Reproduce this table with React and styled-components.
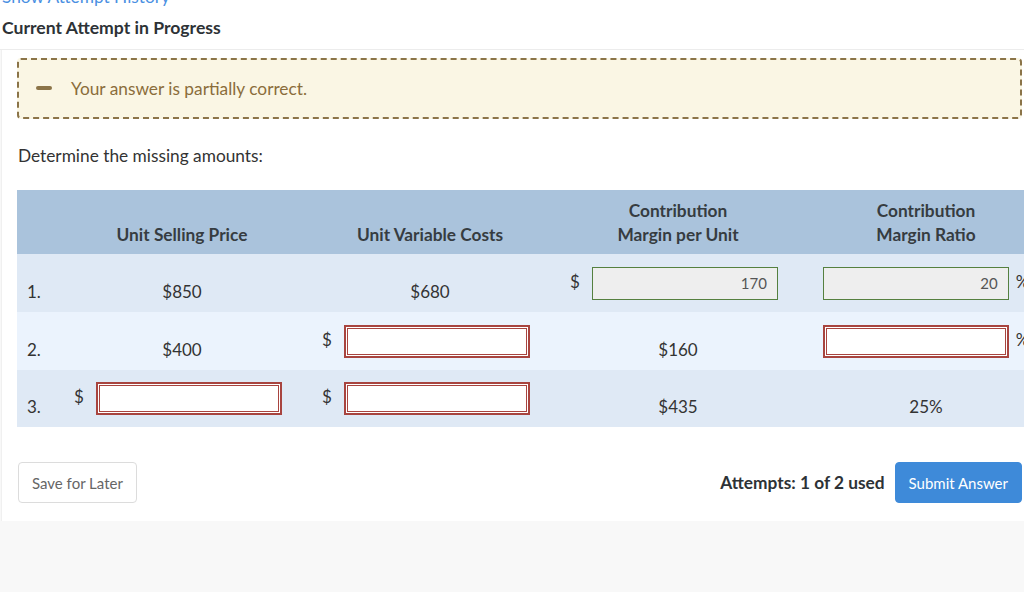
import React from 'react';
import styled, { createGlobalStyle } from 'styled-components';

const GlobalStyle = createGlobalStyle`
  body {
    margin: 0;
    background: #f8f8f8;
    font-family: Lato, 'Open Sans', sans-serif;
    color: #333;
    overflow: hidden;
  }
`;

const Top = styled.header`
  background: #fff;
  padding: 0 0 0 2px;
  height: 49px;
  overflow: hidden;
  border-bottom: 1px solid #ececec;

  a {
    display: block;
    margin-top: -13px;
    font-size: 17.3px;
    line-height: 20px;
    color: #4a90e2;
    text-decoration: none;
  }
  h1 {
    margin: 10px 0 0 0;
    font-size: 17.6px;
    font-weight: 700;
    line-height: 22px;
    color: #2d3236;
  }
`;

const Panel = styled.section`
  background: #fff;
  margin-left: 1px;
  border-left: 1px solid #f0f0f0;
  padding: 8px 2px 18px 15px;
`;

const Feedback = styled.div`
  display: flex;
  align-items: center;
  height: 57px;
  border: 2px dashed #8b7448;
  border-radius: 4px;
  background: #faf6e4;
  padding-left: 17px;
  color: #8a6d3b;
  font-size: 17.3px;
`;

const Dash = styled.span`
  width: 16px;
  height: 4px;
  border-radius: 2px;
  background: #8b7448;
  margin-right: 19px;
  margin-top: -2px;
`;

const Prompt = styled.p`
  margin: 26px 1px 0;
  font-size: 17.3px;
  line-height: 22px;
  color: #333;
`;

const Table = styled.div`
  margin-top: 23px;
  width: 1033px;
`;

const Row = styled.div`
  display: grid;
  grid-template-columns: 41px repeat(4, 248px);
  align-items: center;
  height: ${p => p.h}px;
  background: ${p => p.bg};
`;

const HeadCell = styled.div`
  align-self: end;
  padding-bottom: 7px;
  text-align: center;
  font-size: 17.3px;
  font-weight: 700;
  line-height: 24px;
  color: #363c41;
`;

const Num = styled.div`
  padding: 16px 0 0 10px;
  font-size: 17px;
  color: #333;
`;

const Value = styled.div`
  padding-top: 16px;
  text-align: center;
  font-size: 17px;
  color: #333;
`;

const Field = styled.div`
  display: flex;
  justify-content: center;
  align-items: center;
  gap: ${p => (p.unit === '%' ? 7 : 12)}px;
  padding-right: ${p => (p.unit === '%' ? 0 : 8)}px;
  font-size: 17px;
  color: #333;

  span {
    margin-top: -4px;
  }
`;

const Input = styled.input`
  box-sizing: border-box;
  width: 186px;
  height: 33px;
  padding: 0 10px;
  font-family: Lato, sans-serif;
  font-size: 15px;
  text-align: right;
  color: #555;
  outline: none;
  border: ${p => (p.ok ? '1px solid #55803f' : '2px solid #a8443f')};
  box-shadow: ${p => (p.ok ? 'none' : 'inset 0 0 0 1px #fff, inset 0 0 0 2px #a8443f')};
  background: ${p => (p.ok ? '#eeeeee' : '#fff')};
`;

const Footer = styled.div`
  display: flex;
  align-items: center;
  margin-top: 35px;
  padding-left: 1px;
`;

const Button = styled.button`
  height: 41px;
  padding: 0 13px;
  border-radius: 4px;
  font-family: Lato, sans-serif;
  font-size: 15px;
  border: 1px solid ${p => (p.primary ? '#3e8ad9' : '#dcdcdc')};
  background: ${p => (p.primary ? '#3e8ad9' : '#fff')};
  color: ${p => (p.primary ? '#fff' : '#666')};
`;

const Attempts = styled.span`
  margin-left: auto;
  margin-right: 10px;
  font-size: 17.3px;
  font-weight: 700;
  color: #2d3236;
`;

const Cell = ({ unit, ok, value }) => (
  <Field unit={unit}>
    {unit === '$' && <span>$</span>}
    <Input ok={ok} defaultValue={value} readOnly />
    {unit === '%' && <span>%</span>}
  </Field>
);

const App = () => (
  <>
    <GlobalStyle />
    <Top>
      <a href="#">Show Attempt History</a>
      <h1>Current Attempt in Progress</h1>
    </Top>
    <Panel>
      <Feedback>
        <Dash />
        Your answer is partially correct.
      </Feedback>
      <Prompt>Determine the missing amounts:</Prompt>
      <Table>
        <Row h={64} bg="#aac3dc">
          <div />
          <HeadCell>Unit Selling Price</HeadCell>
          <HeadCell>Unit Variable Costs</HeadCell>
          <HeadCell>
            Contribution
            <br />
            Margin per Unit
          </HeadCell>
          <HeadCell>
            Contribution
            <br />
            Margin Ratio
          </HeadCell>
        </Row>
        <Row h={58} bg="#dfe9f5">
          <Num>1.</Num>
          <Value>$850</Value>
          <Value>$680</Value>
          <Cell unit="$" ok value="170" />
          <Cell unit="%" ok value="20" />
        </Row>
        <Row h={58} bg="#ebf3fd">
          <Num>2.</Num>
          <Value>$400</Value>
          <Cell unit="$" value="" />
          <Value>$160</Value>
          <Cell unit="%" value="" />
        </Row>
        <Row h={57} bg="#dfe9f5">
          <Num>3.</Num>
          <Cell unit="$" value="" />
          <Cell unit="$" value="" />
          <Value>$435</Value>
          <Value>25%</Value>
        </Row>
      </Table>
      <Footer>
        <Button>Save for Later</Button>
        <Attempts>Attempts: 1 of 2 used</Attempts>
        <Button primary>Submit Answer</Button>
      </Footer>
    </Panel>
  </>
);

export default App;
